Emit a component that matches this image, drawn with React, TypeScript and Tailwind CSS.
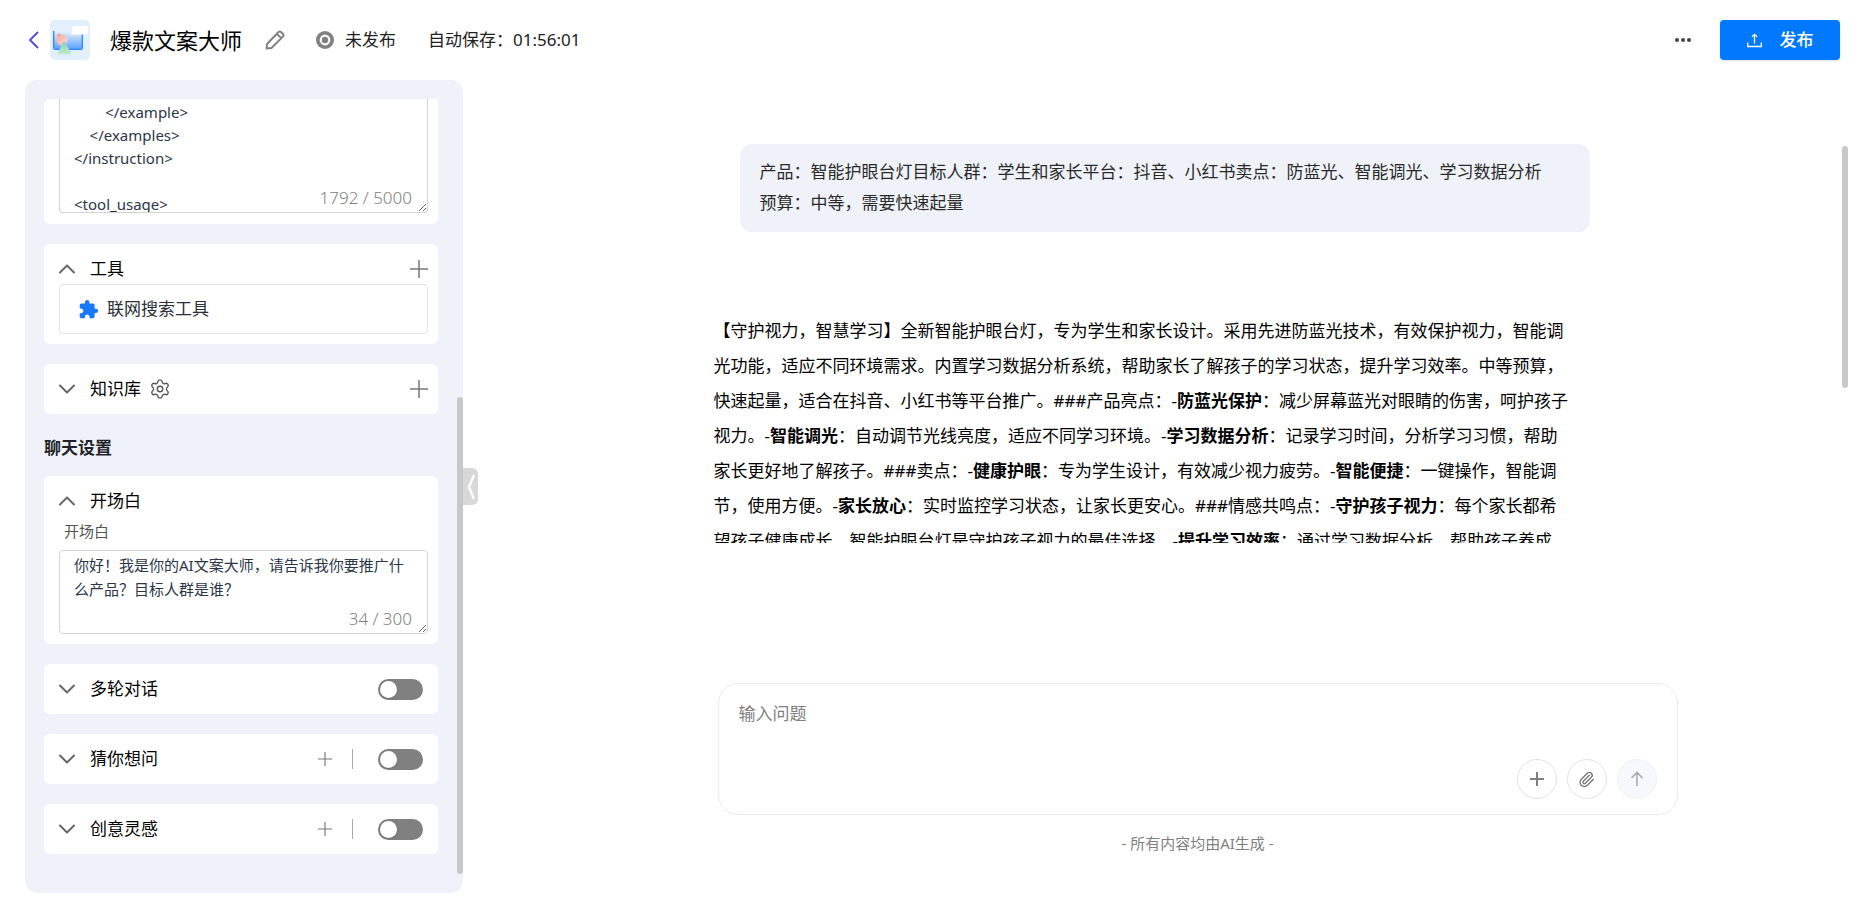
import { useState } from "react";
import type { ReactNode } from "react";
import { ChevronDown, ChevronUp, Paperclip, Settings } from "lucide-react";
import { MdExtension } from "react-icons/md";

const promptTail = `        </example>
    </examples>
</instruction>

<tool_usage>`;

const greeting = "你好！我是你的AI文案大师，请告诉我你要推广什么产品？目标人群是谁？";

function PlusIcon({ size = 18 }: { size?: number }) {
  return (
    <svg width={size} height={size} viewBox="0 0 18 18" fill="none" stroke="#777" strokeWidth="1.5">
      <path d="M9 0v18M0 9h18" />
    </svg>
  );
}

function AppLogo() {
  return (
    <svg width="40" height="40" viewBox="0 0 40 40" className="ml-[11px] shrink-0">
      <defs>
        <linearGradient id="screen" x1="0" y1="0" x2="0" y2="1">
          <stop offset="0" stopColor="#e2efff" />
          <stop offset="1" stopColor="#5aa2ff" />
        </linearGradient>
        <linearGradient id="cone" x1="0" y1="0" x2="0" y2="1">
          <stop offset="0" stopColor="#84cfb8" />
          <stop offset="1" stopColor="#bfeccb" />
        </linearGradient>
        <linearGradient id="head" x1="0" y1="0" x2="1" y2="1">
          <stop offset="0" stopColor="#f5a79b" />
          <stop offset="1" stopColor="#fbdcd2" />
        </linearGradient>
      </defs>
      <rect width="40" height="40" rx="5" fill="#e2efff" />
      <path d="M4 12h28v15a2 2 0 0 1-2 2H6a2 2 0 0 1-2-2z" fill="url(#screen)" />
      <path d="M3.700 11v17a1.300 1.300 0 0 0 1.300 1.300h26a1.300 1.300 0 0 0 1.300-1.300V11" fill="none" stroke="#2f80ff" strokeWidth="1.300" />
      <path d="M24 6h12a2 2 0 0 1 2 2v4.500a2 2 0 0 1-2 2H20c2-1 2-3 2-5V8a2 2 0 0 1 2-2z" fill="#fff" />
      <circle cx="12" cy="20" r="5.500" fill="url(#head)" />
      <path d="M5 16l5-3 .5 3z" fill="#f2a195" />
      <path d="M15 22.500l6 9.500a1.500 1.500 0 0 1-1.200 2.200H9.200A1.500 1.500 0 0 1 8 32l5-9.500a1.200 1.200 0 0 1 2 0z" fill="url(#cone)" />
    </svg>
  );
}

function Toggle({ label }: { label: string }) {
  const [on, setOn] = useState(false);
  return (
    <label className="relative mr-[5px] block h-[21px] w-[45px] cursor-pointer">
      <input
        type="checkbox"
        role="switch"
        aria-label={label}
        checked={on}
        onChange={() => setOn(!on)}
        className="peer sr-only"
      />
      <span className="block h-full rounded-full bg-[#808080] peer-checked:bg-[#0079ff]"></span>
      <span className="absolute left-[2px] top-[2px] size-[17px] rounded-full bg-white shadow peer-checked:left-[26px]"></span>
    </label>
  );
}

interface SectionProps {
  title: string;
  open?: boolean;
  extra?: ReactNode;
  actions?: ReactNode;
  children?: ReactNode;
}

function Section({ title, open, extra, actions, children }: SectionProps) {
  const Chevron = open ? ChevronUp : ChevronDown;
  return (
    <section className="rounded-md bg-white py-[10px] pr-[10px] pl-[15px]">
      <div className="flex h-[30px] items-center">
        <button type="button" aria-expanded={!!open} className="flex items-center gap-[9px]">
          <Chevron size={28} strokeWidth={1.700} className="-ml-[6px] text-[#666]" />
          <span>{title}</span>
        </button>
        {extra}
        <div className="ml-auto flex items-center">{actions}</div>
      </div>
      {children}
    </section>
  );
}

function Sidebar() {
  return (
    <aside className="relative mb-[7px] ml-[25px] w-[438px] shrink-0 rounded-xl bg-[#eff3f9] pt-[19px] pr-[25px] pl-[19px]">
      <div className="flex flex-col gap-5">
        <section className="rounded-md rounded-tr-none bg-white pr-[10px] pb-[11px] pl-[15px]">
          <div className="relative">
            <textarea
              aria-label="提示词"
              defaultValue={promptTail}
              className="block h-[114px] w-full resize-y overflow-hidden rounded-b border border-t-0 border-[#d4d4d4] px-[14px] pt-[2px] text-[15px] leading-[23px] text-[#2b3648] outline-none"
            />
            <span className="absolute right-4 bottom-[3px] text-[17px] leading-6 font-light text-[#808080]">1792 / 5000</span>
          </div>
        </section>

        <Section title="工具" open actions={<button type="button" aria-label="添加工具"><PlusIcon /></button>}>
          <div className="flex h-[50px] items-center gap-2 rounded border border-[#e4e4e4] pl-[18px] text-[#2b2f36]">
            <MdExtension size={21} className="text-[#1677ff]" />
            <span>联网搜索工具</span>
          </div>
        </Section>

        <Section
          title="知识库"
          extra={
            <button type="button" aria-label="知识库设置" className="ml-2">
              <Settings size={22} strokeWidth={1.500} className="text-[#555]" />
            </button>
          }
          actions={<button type="button" aria-label="添加知识库"><PlusIcon /></button>}
        />

        <h2 className="pt-[6px] leading-4 font-bold text-[#1f2329]">聊天设置</h2>

        <Section title="开场白" open>
          <label htmlFor="greeting" className="block pb-1 pl-[5px] text-[15px] leading-[30px] text-[#555]">开场白</label>
          <div className="relative">
            <textarea
              id="greeting"
              defaultValue={greeting}
              className="block h-[84px] w-full resize-y overflow-hidden rounded border border-[#d4d4d4] px-[14px] py-[2px] text-[15px] leading-6 text-[#2b3648] outline-none"
            />
            <span className="absolute right-4 bottom-[3px] text-[17px] leading-6 font-light text-[#808080]">34 / 300</span>
          </div>
        </Section>

        <Section title="多轮对话" actions={<Toggle label="多轮对话" />} />
        {["猜你想问", "创意灵感"].map((title) => (
          <Section
            key={title}
            title={title}
            actions={
              <>
                <button type="button" aria-label={"添加" + title}><PlusIcon size={14} /></button>
                <span className="mr-[25px] ml-5 h-5 w-px bg-[#aaa]"></span>
                <Toggle label={title} />
              </>
            }
          />
        ))}
      </div>

      <div className="absolute right-0 bottom-[19px] h-[477px] w-[6px] rounded-full bg-[#c8c8c8]"></div>
      <button
        type="button"
        aria-label="收起"
        className="absolute top-[388px] left-full flex h-[37px] w-[15px] items-center justify-center rounded-r-md bg-[#d8d8d8]"
      >
        <svg width="8" height="26" viewBox="0 0 8 26" fill="none" stroke="#fff" strokeWidth="2.400">
          <path d="M7 1L2 13l5 12" />
        </svg>
      </button>
    </aside>
  );
}

function Header() {
  return (
    <header className="flex h-20 shrink-0 items-center pr-5 pl-7 text-[#222]">
      <button type="button" aria-label="返回">
        <svg width="11" height="18" viewBox="0 0 11 18" fill="none" stroke="#4b48e5" strokeWidth="1.800">
          <path d="M10 1L2 9l8 8" />
        </svg>
      </button>
      <AppLogo />
      <h1 className="ml-5 text-[22px] leading-7 text-black">爆款文案大师</h1>
      <button type="button" aria-label="编辑名称" className="ml-[23px]">
        <svg width="20" height="20" viewBox="0 0 20 20" fill="none" stroke="#808080" strokeWidth="1.900" strokeLinejoin="round">
          <path d="M1.500 18.500l.5-4.500L13.500 2a1.800 1.800 0 0 1 2.500 0l2 2a1.800 1.800 0 0 1 0 2.500L6.500 18zM12 4l4.500 4.500" />
        </svg>
      </button>
      <svg width="18" height="18" viewBox="0 0 18 18" className="ml-[31px]">
        <circle cx="9" cy="9" r="9" fill="#808080" />
        <circle cx="9" cy="9" r="4.300" fill="none" stroke="#fff" strokeWidth="2.200" />
      </svg>
      <span className="ml-[11px]">未发布</span>
      <span className="ml-8">自动保存：01:56:01</span>
      <button type="button" aria-label="更多" className="mr-[29px] ml-auto flex gap-[2px]">
        <span className="size-1 rounded-full bg-[#444]"></span>
        <span className="size-1 rounded-full bg-[#444]"></span>
        <span className="size-1 rounded-full bg-[#444]"></span>
      </button>
      <button type="button" className="flex h-10 w-[120px] items-center justify-center gap-[18px] rounded bg-[#0079ff] font-medium text-white shadow-sm">
        <svg width="15" height="15" viewBox="0 0 15 15" fill="none" stroke="#fff" strokeWidth="1.300">
          <path d="M.7 9.500v4h13.600v-4M7.500 10.500V1.500M5 3.800l2.500-2.500L10 3.800" />
        </svg>
        发布
      </button>
    </header>
  );
}

function Chat() {
  return (
    <main className="relative flex min-w-0 flex-1 flex-col items-center pl-[72px]">
      <div className="mt-16 w-full max-w-[968px] pr-[92px]">
        <div className="ml-[26px] rounded-xl bg-[#eff3f9] px-5 pt-3 pb-[14px] leading-[31px] text-[#2a2a2a]">
          产品：智能护眼台灯目标人群：学生和家长平台：抖音、小红书卖点：防蓝光、智能调光、学习数据分析
          <br />
          预算：中等，需要快速起量
        </div>
        <div className="mt-[81px] h-[230px] max-w-[858px] overflow-hidden leading-[35px] text-black">
          【守护视力，智慧学习】全新智能护眼台灯，专为学生和家长设计。采用先进防蓝光技术，有效保护视力，智能调光功能，适应不同环境需求。内置学习数据分析系统，帮助家长了解孩子的学习状态，提升学习效率。中等预算，快速起量，适合在抖音、小红书等平台推广。###产品亮点：-<strong>防蓝光保护</strong>：减少屏幕蓝光对眼睛的伤害，呵护孩子视力。-<strong>智能调光</strong>：自动调节光线亮度，适应不同学习环境。-<strong>学习数据分析</strong>：记录学习时间，分析学习习惯，帮助家长更好地了解孩子。###卖点：-<strong>健康护眼</strong>：专为学生设计，有效减少视力疲劳。-<strong>智能便捷</strong>：一键操作，智能调节，使用方便。-<strong>家长放心</strong>：实时监控学习状态，让家长更安心。###情感共鸣点：-<strong>守护孩子视力</strong>：每个家长都希望孩子健康成长，智能护眼台灯是守护孩子视力的最佳选择。-<strong>提升学习效率</strong>：通过学习数据分析，帮助孩子养成
        </div>
      </div>

      <form
        className="mt-auto flex w-full max-w-[960px] flex-col rounded-[20px] border border-[#ececec] px-5 pt-4 pb-[15px]"
        onSubmit={(e) => e.preventDefault()}
      >
        <textarea
          aria-label="输入问题"
          placeholder="输入问题"
          className="h-[59px] w-full resize-none leading-7 outline-none placeholder:text-[#808080]"
        />
        <div className="flex justify-end gap-[10px]">
          <button type="button" aria-label="新对话" className="flex size-10 items-center justify-center rounded-full border border-[#e2e2e2]">
            <svg width="16" height="16" viewBox="0 0 16 16" fill="none" stroke="#808080" strokeWidth="2">
              <path d="M8 1v14M1 8h14" />
            </svg>
          </button>
          <button type="button" aria-label="上传附件" className="flex size-10 items-center justify-center rounded-full border border-[#e2e2e2]">
            <Paperclip size={17} strokeWidth={1.900} className="text-[#777]" />
          </button>
          <button type="submit" aria-label="发送" className="flex size-10 items-center justify-center rounded-full border border-[#f0f1f5] bg-[#f7f8fd]">
            <svg width="14" height="16" viewBox="0 0 14 16" fill="none" stroke="#aaa" strokeWidth="1.600">
              <path d="M7 15V1.500M1.500 7L7 1.500 12.500 7" />
            </svg>
          </button>
        </div>
      </form>
      <p className="mt-4 mb-[45px] text-[15px] leading-6 text-[#808080]">- 所有内容均由AI生成 -</p>

      <div className="absolute top-[66px] right-3 h-[242px] w-[6px] rounded-full bg-[#c8c8c8]"></div>
    </main>
  );
}

export default function App() {
  return (
    <div className="flex min-h-screen flex-col bg-white font-['Noto_Sans','Noto_Sans_CJK_SC',sans-serif] text-[17px] text-black">
      <Header />
      <div className="flex flex-1">
        <Sidebar />
        <Chat />
      </div>
    </div>
  );
}
